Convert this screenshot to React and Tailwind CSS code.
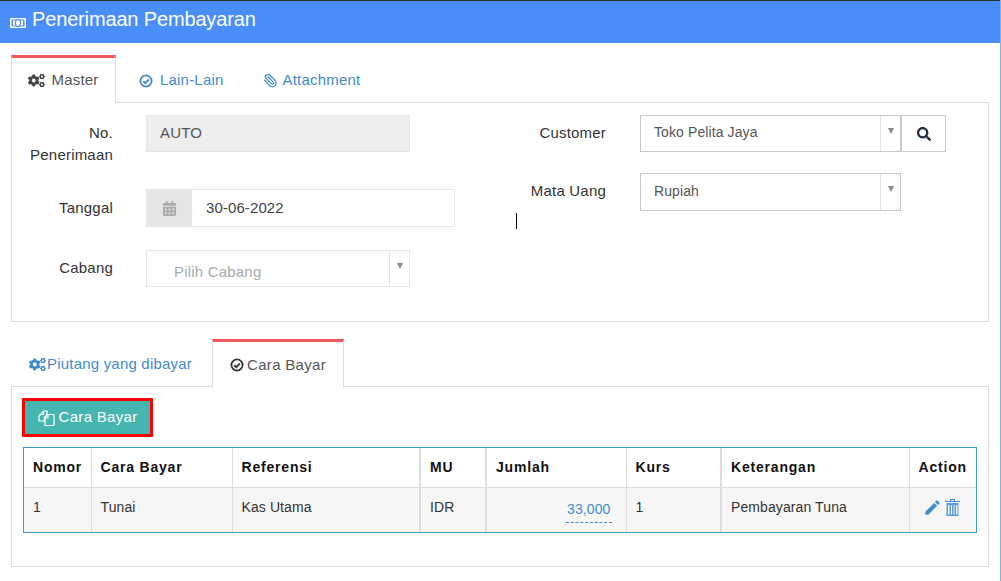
import React from "react";
import { FaCogs, FaSearch, FaCalendarAlt } from "react-icons/fa";
import { MdEdit } from "react-icons/md";
import { Paperclip } from "lucide-react";

const Caret = () => (
  <span className="flex w-[20px] shrink-0 justify-center border-l border-[#e3e3e3] pt-[12px]">
    <span className="h-0 w-0 border-x-[3.5px] border-t-[6px] border-x-transparent border-t-[#888]" />
  </span>
);

const CheckCircle = () => (
  <svg width="14" height="14" viewBox="0 0 14 14" fill="none" stroke="currentColor" aria-hidden="true" className="shrink-0">
    <circle cx="7" cy="7" r="5.6" strokeWidth="1.8" />
    <path d="M4.2 7.2 6.2 9.1 9.9 5.4" strokeWidth="1.9" />
  </svg>
);

const Label = ({ className, children }) => (
  <div className={"text-right text-[15px] leading-[22px] tracking-[0.2px] text-[#333] " + className}>{children}</div>
);

const Select = ({ className, textClass, text }) => (
  <div className={"flex border border-[#c8c8c8] bg-white " + className}>
    <span className={"flex-1 pl-[13px] text-[14px] leading-[20px] tracking-[0.1px] text-[#555] " + textClass}>{text}</span>
    <Caret />
  </div>
);

const Th = ({ className = "", children }) => (
  <th className={"h-[39px] border-r border-b border-[#ddd] px-[9px] text-left text-[14px] font-bold tracking-[0.8px] text-[#111] " + className}>
    {children}
  </th>
);

const Td = ({ className = "", children }) => (
  <td className={"h-[45px] border-r border-[#ddd] bg-[#f6f6f6] px-[9px] text-[14px] tracking-[0.1px] text-[#333] " + className}>
    {children}
  </td>
);

export default function App() {
  return (
    <div className="h-[581px] w-[1001px] overflow-hidden border-r border-[#7fb0f5] bg-white font-['Liberation_Sans',Arial,sans-serif]">
      <header className="flex h-[43px] items-center gap-[6px] border-t border-[#2d2d2d] bg-[#4a8ef9] pb-[6px] pl-[10px] text-white">
        <svg width="16" height="10" viewBox="0 0 16 10" aria-hidden="true" className="mt-[7px] shrink-0">
          <rect width="16" height="10" rx="1" fill="#fff" />
          <rect x="1.5" y="1.5" width="13" height="7" fill="#4a8ef9" />
          <rect x="3" y="2.5" width="10" height="5" fill="#fff" />
          <ellipse cx="8" cy="5" rx="2.6" ry="3.6" fill="#fff" stroke="#4a8ef9" strokeWidth="1.2" />
        </svg>
        <h1 className="text-[20px] leading-[28px] tracking-[-0.15px]">Penerimaan Pembayaran</h1>
      </header>

      <div className="px-[11px] pt-[12px]">
        <nav className="flex h-[48px] items-stretch">
          <div className="-mb-px flex w-[105px] items-center justify-center gap-[6px] border-x border-t-[3px] border-x-[#ddd] border-t-[#f4555f] bg-white pb-[2px] text-[15px] tracking-[0.2px] text-[#555]">
            <FaCogs className="text-[17px] text-[#444]" /> Master
          </div>
          <div className="flex flex-1 items-center border-b border-[#ddd] pt-[4px] text-[15px] tracking-[0.2px] text-[#428bca]">
            <span className="ml-[23px] flex items-center gap-[7px]"><CheckCircle /> Lain-Lain</span>
            <span className="ml-[39px] flex items-center gap-[5px]"><Paperclip size={15} strokeWidth={2} className="-scale-x-100" /> Attachment</span>
          </div>
        </nav>

        <section className="flex h-[219px] border-x border-b border-[#ddd]">
          <div className="w-[504px]">
            <div className="flex pt-[12px]">
              <Label className="ml-[18px] w-[83px] pt-[7px]">No. Penerimaan</Label>
              <div className="ml-[33px] h-[37px] w-[264px] border border-[#e5e5e5] bg-[#eee] pl-[13px] pt-[6px] text-[15px] leading-[22px] tracking-[0.2px] text-[#555]">AUTO</div>
            </div>
            <div className="mt-[23px] flex">
              <Label className="ml-[18px] w-[83px] pt-[8px]">Tanggal</Label>
              <div className="ml-[33px] flex h-[38px] w-[309px] border border-[#e5e5e5]">
                <span className="flex w-[45px] items-center justify-center bg-[#e5e5e5] text-[#aaa]"><FaCalendarAlt className="text-[15px]" /></span>
                <span className="pl-[14px] pt-[7px] text-[15px] leading-[22px] tracking-[0.1px] text-[#444]">30-06-2022</span>
              </div>
            </div>
            <div className="mt-[23px] flex">
              <Label className="ml-[18px] w-[83px] pt-[7px]">Cabang</Label>
              <div className="ml-[33px] flex h-[37px] w-[264px] border border-[#e5e5e5]">
                <span className="flex-1 pl-[27px] pt-[11px] text-[15px] leading-[20px] tracking-[0.2px] text-[#aaa]">Pilih Cabang</span>
                <Caret />
              </div>
            </div>
          </div>
          <div className="relative flex-1">
            <span className="absolute left-0 top-[110px] h-[16px] w-px bg-black" />
            <div className="flex pt-[12px]">
              <Label className="w-[90px] pt-[7px]">Customer</Label>
              <Select className="ml-[34px] h-[37px] w-[261px]" textClass="pt-[6px]" text="Toko Pelita Jaya" />
              <button className="flex h-[37px] w-[45px] items-center justify-center border border-[#ccc] bg-white text-[#1f2d3d]"><FaSearch className="text-[14px]" /></button>
            </div>
            <div className="mt-[21px] flex">
              <Label className="w-[90px] pt-[7px]">Mata Uang</Label>
              <Select className="ml-[34px] h-[38px] w-[261px]" textClass="pt-[7px]" text="Rupiah" />
            </div>
          </div>
        </section>

        <nav className="mt-[17px] flex h-[48px] items-stretch">
          <div className="flex w-[201px] items-center border-b border-[#ddd] pl-[18px] pt-[4px] text-[15px] tracking-[0.2px] text-[#428bca]">
            <span className="flex items-center gap-[1px]"><FaCogs className="text-[17px]" /> Piutang yang dibayar</span>
          </div>
          <div className="-mb-px flex w-[132px] items-center justify-center gap-[3px] border-x border-t-[3px] border-x-[#ddd] border-t-[#f4555f] bg-white text-[15px] tracking-[0.3px] text-[#555]">
            <span className="text-[#333]"><CheckCircle /></span> Cara Bayar
          </div>
          <div className="flex-1 border-b border-[#ddd]" />
        </nav>

        <section className="h-[180px] border-x border-b border-[#ddd] px-[10px] pt-[11px]">
          <button className="flex h-[39px] w-[131px] items-center justify-center gap-[4px] rounded-[1px] border-[3px] border-[#f00] bg-[#45b6af] text-[15px] tracking-[0.3px] text-white">
            <svg width="17" height="16" viewBox="0 0 17 16" fill="none" stroke="currentColor" strokeWidth="1.2" aria-hidden="true" className="shrink-0">
              <path d="M5.5 1H9v3L6.5 7.5V11H1V6.5z" />
              <path d="M5.5 1v3.5H1.5" />
              <path d="M9.5 4.5H16v11H7V8z" fill="#45b6af" />
              <path d="M10 4.5V8H7" />
            </svg>
            Cara Bayar
          </button>
          <div className="ml-px mt-[10px] w-[954px] border border-[#3598c9]">
            <table className="w-full table-fixed border-collapse">
              <colgroup>
                <col className="w-[67px]" />
                <col className="w-[141px]" />
                <col className="w-[188px]" />
                <col className="w-[66px]" />
                <col className="w-[140px]" />
                <col className="w-[95px]" />
                <col className="w-[188px]" />
                <col />
              </colgroup>
              <thead>
                <tr>
                  <Th className="tracking-[0.3px]">Nomor</Th>
                  <Th>Cara Bayar</Th>
                  <Th className="border-r-2">Referensi</Th>
                  <Th className="border-r-2">MU</Th>
                  <Th>Jumlah</Th>
                  <Th className="border-r-2">Kurs</Th>
                  <Th>Keterangan</Th>
                  <Th className="border-r-0">Action</Th>
                </tr>
              </thead>
              <tbody>
                <tr>
                  <Td className="pb-[4px]">1</Td>
                  <Td className="pb-[4px]">Tunai</Td>
                  <Td className="border-r-2 pb-[4px]">Kas Utama</Td>
                  <Td className="border-r-2 pb-[4px]">IDR</Td>
                  <Td className="pt-[3px] text-right">
                    <span className="mr-[5px] inline-block w-[46px] border-b border-dashed border-[#428bca] pb-[2px] pr-px text-[#428bca]">33,000</span>
                  </Td>
                  <Td className="border-r-2 pb-[4px]">1</Td>
                  <Td className="pb-[4px]">Pembayaran Tuna</Td>
                  <Td className="border-r-0 pb-[4px] pl-[13px]">
                    <span className="flex items-center gap-[3px] text-[#428bca]">
                      <MdEdit className="text-[19px]" />
                      <svg width="15" height="17" viewBox="0 0 15 17" fill="currentColor" aria-hidden="true">
                        <path fillRule="evenodd" d="M5 0h5v2h5v1H0V2h5zM6 1v1h3V1z" />
                        <path fillRule="evenodd" d="M1.5 4h12v13h-12zM3 6v9.5h1.5V6zM6 6v9.5h1V6zM8.5 6v9.5h1V6zM11 6v9.5h1.5V6z" opacity="0.85" />
                      </svg>
                    </span>
                  </Td>
                </tr>
              </tbody>
            </table>
          </div>
        </section>
      </div>
    </div>
  );
}
